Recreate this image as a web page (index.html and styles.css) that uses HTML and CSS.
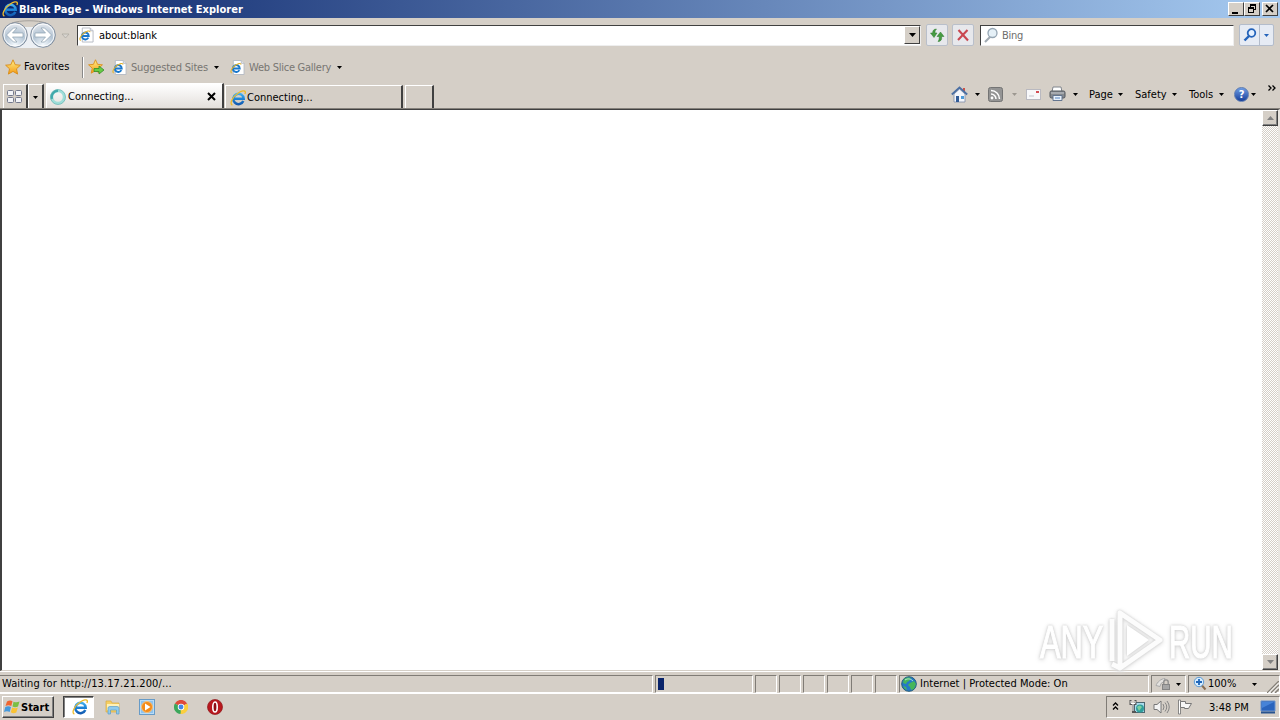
FILE: index.html
```html
<!DOCTYPE html>
<html lang="en">
<head>
    <meta charset="UTF-8">
    <title>Blank Page - Windows Internet Explorer</title>
    <link rel="stylesheet" href="styles.css">
</head>
<body>
    <!-- shared icons -->
    <svg class="defs" width="0" height="0">
        <defs>
            <linearGradient id="blue" gradientUnits="userSpaceOnUse" x1="0" y1="2" x2="0" y2="15">
                <stop offset="0" stop-color="#4fbdf5"/><stop offset="0.5" stop-color="#1f86d8"/><stop offset="1" stop-color="#1257ae"/>
            </linearGradient>
            <linearGradient id="gold" x1="0" y1="0" x2="0" y2="1">
                <stop offset="0" stop-color="#fff08a"/><stop offset="1" stop-color="#f49a13"/>
            </linearGradient>
            <radialGradient id="orb" cx="50%" cy="90%" r="85%">
                <stop offset="0" stop-color="#f4f9fd"/><stop offset="0.55" stop-color="#b3c4d4"/><stop offset="1" stop-color="#e3e7ed"/>
            </radialGradient>
            <symbol id="ie" viewBox="0 0 16 16">
                <path d="M13.300 11A5.200 5.200 0 1 1 13.700 8.700H4.500" fill="none" stroke="url(#blue)" stroke-width="2.500"/>
                <path d="M2.400 15.200C-.8 13.600 2.400 6.800 8 3.200 11.600.800 14.800.100 15.300 1.800c.2.700 0 1.400-.4 2.200" fill="none" stroke="#eebb2c" stroke-width="1.300"/>
            </symbol>
            <symbol id="iepage" viewBox="0 0 16 16">
                <path d="M3.500.5h8.500l3 3v12h-11.500z" fill="#fff" stroke="#b5bac2"/>
                <path d="M12 .5v3h3" fill="#e7eaf0" stroke="#b5bac2"/>
                <path d="M10 10.800A3.700 3.700 0 1 1 10.400 9H4" fill="none" stroke="#1b78cc" stroke-width="2"/>
                <path d="M1.700 14C-.6 12 3.500 5.500 9.500 3.800q2.300-.5 2 1.200" fill="none" stroke="#e4b32b" stroke-width="1.200"/>
            </symbol>
            <symbol id="star" viewBox="0 0 16 16">
                <path d="M8 .8l2.200 4.900 5.200.5-3.900 3.600 1.100 5.300L8 12.400l-4.600 2.700 1.100-5.300L.6 6.200l5.200-.5z" fill="url(#gold)" stroke="#d98b16" stroke-width=".9"/>
            </symbol>
            <symbol id="arrow" viewBox="0 0 5 3">
                <path d="M0 0h5L2.500 3z" fill="currentColor"/>
            </symbol>
        </defs>
    </svg>

    <div class="title-bar">
        <svg class="title-icon" width="16" height="16"><use href="#ie"/></svg>
        <span class="title-text">Blank Page - Windows Internet Explorer</span>
        <div class="window-buttons">
            <span class="win-btn"><svg width="12" height="10"><path d="M2 8h6v2H2z"/></svg></span>
            <span class="win-btn"><svg width="12" height="10"><path d="M4.500 1v2.500M4 1.500h6M9.500 1v5M8 5.500h2M2 4.500h6M2.500 4v5M7.500 4v5M2 8.500h6" stroke="#000" fill="none"/><path d="M4 0h6v2H4zM2 3h6v2H2z"/></svg></span>
            <span class="win-btn close"><svg width="12" height="10"><path d="M2 1l7 7M9 1L2 8" stroke="#000" stroke-width="1.700"/></svg></span>
        </div>
    </div>

    <div class="nav-bar">
        <svg class="nav-arrows" width="72" height="32" viewBox="0 0 72 32">
            <path d="M12 4c8-3 26-3 34 0" fill="none" stroke="#a4a09c"/>
            <path d="M15 29h28V8H15z" fill="#edf0f4"/>
            <g fill="url(#orb)" stroke="#808d9d">
                <circle cx="15" cy="16" r="12.300"/><circle cx="43" cy="16" r="12.300"/>
            </g>
            <g fill="none" stroke="#fff" stroke-opacity=".85">
                <circle cx="15" cy="16" r="11"/><circle cx="43" cy="16" r="11"/>
            </g>
            <g fill="#fff" stroke="#8ea0b0" stroke-width=".7">
                <path d="M6.500 16l7-7h3.500l-4.500 5H23v4H12.500l4.500 5H13.500z"/>
                <path d="M51.500 16l-7-7H41l4.500 5H35v4h10.500L41 23h3.500z"/>
            </g>
            <path d="M62 15h7l-3.500 4z" fill="#d8d5d0" stroke="#aaa69f" stroke-width=".7"/>
        </svg>
        <div class="address-box">
            <svg width="15" height="16"><use href="#iepage"/></svg>
            <span class="address-text">about:blank</span>
            <span class="address-drop"><svg width="7" height="4" viewBox="0 0 7 4"><path d="M0 0h7L3.500 4z"/></svg></span>
        </div>
        <span class="nav-btn refresh"><svg width="16" height="16"><path d="M7.500 2C4.500 2 3.500 4 3.700 6H1.500L5 10.500 8 6H6C5.900 4.500 6 3.500 7.500 2z" fill="#469b42" stroke="#2c7b2e" stroke-width=".5"/><path d="M9 14.500c3 0 4-2 3.600-5H15L11.500 5 8 9.500h2.200c.1 2 0 3.500-1.200 5z" fill="#469b42" stroke="#2c7b2e" stroke-width=".5"/></svg></span>
        <span class="nav-btn stop"><svg width="16" height="16"><path d="M3.500 3l9.500 10.500M12.500 3L3 13" stroke="#c94750" stroke-width="2.100"/></svg></span>
        <div class="search-box">
            <svg width="17" height="17"><path d="M7 10l-5 5" stroke="#a1aab2" stroke-width="2.200"/><circle cx="9.500" cy="6" r="4.500" fill="#e5f0f7" stroke="#95a5b3" stroke-width="1.300"/></svg>
            <span class="search-text">Bing</span>
        </div>
        <div class="search-go">
            <span><svg width="16" height="16"><path d="M7 9l-4.500 4.500" stroke="#2463ba" stroke-width="2.400"/><circle cx="9.500" cy="6" r="3.800" fill="#e4f0ff" stroke="#2463ba" stroke-width="1.800"/></svg></span>
            <span class="go-drop"><svg width="5" height="3"><use href="#arrow"/></svg></span>
        </div>
    </div>

    <div class="favorites-bar">
        <svg class="fav-star" width="16" height="16"><use href="#star"/></svg>
        <span class="fav-title">Favorites</span>
        <span class="separator"></span>
        <svg class="add-star" width="17" height="16"><use href="#star" width="15" height="15"/><path d="M6 9.500h5V7l5 4-5 4v-2.500H6z" fill="#67cc45" stroke="#338b2a" stroke-width=".8"/></svg>
        <svg class="page-icon" width="15" height="15"><use href="#iepage"/></svg>
        <span class="fav-link suggested">Suggested Sites</span>
        <svg width="5" height="3"><use href="#arrow"/></svg>
        <svg class="page-icon second" width="15" height="15"><use href="#iepage"/></svg>
        <span class="fav-link gallery">Web Slice Gallery</span>
        <svg width="5" height="3"><use href="#arrow"/></svg>
    </div>

    <div class="tab-row">
        <div class="quick-tabs">
            <svg width="16" height="14"><g fill="#f3f4f8" stroke="#74798d"><rect x=".5" y=".5" width="6" height="5" rx="1"/><rect x="8.500" y=".5" width="6" height="5" rx="1"/><rect x=".5" y="7.500" width="6" height="5" rx="1"/><rect x="8.500" y="7.500" width="6" height="5" rx="1"/></g></svg>
        </div>
        <div class="quick-drop"><svg width="5" height="3"><use href="#arrow"/></svg></div>
        <div class="tab active">
            <svg width="16" height="16"><circle cx="8" cy="8" r="6.200" fill="none" stroke="#9fded9" stroke-width="2.800"/><path d="M2 10A6.200 6.200 0 0 1 8 1.800" fill="none" stroke="#3fa9ab" stroke-width="2.500"/><circle cx="8" cy="8" r="7.500" fill="none" stroke="#65b5b3" stroke-width=".7"/></svg>
            <span>Connecting...</span>
            <svg class="tab-close" width="9" height="9"><path d="M1 1l7 7M8 1L1 8" stroke="#000" stroke-width="2"/></svg>
        </div>
        <div class="tab second">
            <svg width="16" height="16"><use href="#ie"/></svg>
            <span>Connecting...</span>
        </div>
        <div class="new-tab"></div>
        <div class="command-bar">
            <svg width="17" height="17"><path d="M12 2h2v4h-2z" fill="#cd5148"/><path d="M3 8v8h11V8L8.500 3z" fill="#f4f6fb" stroke="#7d8da9" stroke-width=".8"/><path d="M.8 8.500l7.700-7 7.700 7" fill="none" stroke="#4b6fa3" stroke-width="1.800"/><path d="M5 10h3v6H5z" fill="#315b96"/><path d="M10 10h3v3h-3z" fill="#4e9bd9"/></svg>
            <svg class="home-drop" width="5" height="3"><use href="#arrow"/></svg>
            <svg class="rss" width="15" height="15"><rect x=".5" y=".5" width="14" height="14" rx="2" fill="#949494" stroke="#747474"/><circle cx="4" cy="11" r="1.400" fill="#fff"/><path d="M3 7a5 5 0 0 1 5 5M3 3.500a8.500 8.500 0 0 1 8.500 8.500" fill="none" stroke="#fff" stroke-width="1.500"/></svg>
            <svg class="rss-drop" width="5" height="3"><use href="#arrow"/></svg>
            <svg class="mail" width="15" height="11"><rect x=".5" y=".5" width="14" height="10" fill="#f8f8fa" stroke="#b9b9c0"/><path d="M10 2h3v2h-3z" fill="#d44e55"/><path d="M3 7h5" stroke="#c2c4cc"/></svg>
            <svg class="printer" width="17" height="16"><path d="M4 1h8l1 5H3z" fill="#fff" stroke="#80858c"/><rect x="1" y="5" width="15" height="7" rx="1.500" fill="#85898f" stroke="#51565d"/><path d="M2 7h13" stroke="#c7cbd0"/><path d="M4 9.500h9v5H4z" fill="#e8f1fb" stroke="#63758f"/><path d="M6 12h5" stroke="#5481bd"/></svg>
            <svg class="print-drop" width="5" height="3"><use href="#arrow"/></svg>
            <span class="menu page-menu">Page</span><svg width="5" height="3"><use href="#arrow"/></svg>
            <span class="menu safety">Safety</span><svg width="5" height="3"><use href="#arrow"/></svg>
            <span class="menu tools">Tools</span><svg width="5" height="3"><use href="#arrow"/></svg>
            <span class="help">?</span><svg width="5" height="3"><use href="#arrow"/></svg>
            <svg class="more" width="8" height="6"><path d="M.5.500L3 3 .5 5.500M4.500.500L7 3 4.500 5.500" fill="none" stroke="#000" stroke-width="1.300"/></svg>
        </div>
    </div>

    <div class="viewport">
        <div class="page"></div>
        <div class="scrollbar">
            <span class="scroll-btn"><svg width="7" height="4"><path d="M0 4h7L3.500 0z" fill="#808080"/></svg></span>
            <span class="scroll-btn"><svg width="7" height="4"><path d="M0 0h7L3.500 4z" fill="#808080"/></svg></span>
        </div>
        <svg class="watermark" width="216" height="70" viewBox="0 0 216 70">
            <g fill="#fff" stroke="#fff" stroke-width="1.200">
                <text transform="translate(8 53) scale(.67 1)">ANY</text>
                <text transform="translate(137 53) scale(.64 1)">RUN</text>
            </g>
            <path d="M88 8v55l40-28zM88 8l40 27M80 56V14M88 63l-8-4" fill="none" stroke="#fcfcfc" stroke-width="5" stroke-linejoin="round"/>
            <path d="M95 20v31l22-16z" fill="#fff"/>
        </svg>
    </div>

    <div class="status-bar">
        <div class="pane message">Waiting for http://13.17.21.200/...</div>
        <div class="pane progress"><span class="chunk"></span></div>
        <div class="pane small"></div>
        <div class="pane small"></div>
        <div class="pane small"></div>
        <div class="pane small"></div>
        <div class="pane small"></div>
        <div class="pane small"></div>
        <div class="pane zone">
            <svg width="16" height="16"><circle cx="8" cy="8" r="7.300" fill="#2479c7" stroke="#235c79"/><path d="M3 3c3-2 6-2 7-.5L8 5 6 6 5 8 2 7zM9 7l4-2 2 3-2 5-3 1-1-3-2-2zM2 10l3 1 1 3-2-1z" fill="#46b65a"/><path d="M4 4c3-2 6-1 8 1" fill="none" stroke="#b3e9de"/></svg>
            <span>Internet | Protected Mode: On</span>
        </div>
        <div class="pane privacy">
            <svg width="18" height="16"><path d="M1 9.500c1-3 5-7 9-7l-1 3-3 2-1 3z" fill="#e4e2df" stroke="#aaa"/><rect x="7.500" y="8.500" width="7" height="5" fill="#a6a6a6" stroke="#858585"/><path d="M8.800 8V6a2.200 2.200 0 0 1 4.400 0V8" fill="none" stroke="#8c8c8c" stroke-width="1.300"/></svg>
            <svg class="pane-drop" width="5" height="3"><use href="#arrow"/></svg>
        </div>
        <div class="pane zoom">
            <svg width="14" height="16"><path d="M8.500 9l4 4.500" stroke="#896e54" stroke-width="2"/><circle cx="6" cy="6" r="4.700" fill="#d7edff" stroke="#5f9bd3"/><path d="M6 3v6M3 6h6" stroke="#2167ba" stroke-width="1.800"/></svg>
            <span>100%</span>
            <svg class="pane-drop" width="5" height="3"><use href="#arrow"/></svg>
            <svg class="grip" width="12" height="12"><path d="M0 12L12 0M4 12l8-8M8 12l4-4" stroke="#858078" stroke-width="1.500"/><path d="M1.500 12L12 1.500M5.500 12L12 5.500" stroke="#fff"/></svg>
        </div>
    </div>

    <div class="taskbar">
        <div class="start">
            <svg width="17" height="16"><path d="M3 2.500q3-2 5.500-.3L7.300 7Q4.500 5.500 1.500 7z" fill="#ef6530"/><path d="M9.500 2.700q3 1.200 6-.2L14 7.500q-3 1.500-5.500 0z" fill="#7abf43"/><path d="M1.300 8q3-1.500 5.700 0l-1.300 5Q3 11.500 0 13z" fill="#4599dc"/><path d="M8.200 8.500q3 1.300 5.600 0l-1.500 5q-3 1.400-5.500-.2z" fill="#fac334"/></svg>
            <span>Start</span>
        </div>
        <div class="task-ie"><svg width="16" height="16"><use href="#ie"/></svg></div>
        <svg class="folder" width="16" height="16"><path d="M1 2h5l1 2h7v9H1z" fill="#f5cf63" stroke="#d8aa42" stroke-width=".7"/><path d="M2 5h12v6H2z" fill="#fff1b6"/><path d="M3 15V9q0-1.500 2-1.500h7q2 0 2 1.500v6h-2.500v-4h-6v4z" fill="#8fcbed" stroke="#5b9ec8" stroke-width=".7"/></svg>
        <svg class="media" width="16" height="16"><rect x=".5" y=".5" width="15" height="15" fill="#b8dcf7" stroke="#679bc7"/><path d="M2 2h12v12H2z" fill="#8fc3ee"/><circle cx="8" cy="8" r="5.500" fill="#f48b18" stroke="#fac075"/><path d="M6 4.500L11.500 8 6 11.500z" fill="#fff"/></svg>
        <svg class="chrome" width="14" height="14" viewBox="0 0 16 16"><path d="M8 8L1 4a8 8 0 0 1 14 0z" fill="#df4a3b"/><path d="M8 8L1 4a8 8 0 0 0 6.500 12L11 10z" fill="#3ca75b"/><path d="M8 8l7.200-4A8 8 0 0 1 7.500 16z" fill="#fbcf3e"/><circle cx="8" cy="8" r="3.700" fill="#fff"/><circle cx="8" cy="8" r="2.800" fill="#4587e8"/></svg>
        <svg class="opera" width="16" height="16"><circle cx="8" cy="8" r="7.500" fill="#b9181e" stroke="#8e1519" stroke-width=".7"/><ellipse cx="8" cy="8" rx="2.200" ry="5" fill="#8f0c12" stroke="#fff" stroke-width="1.600"/></svg>
        <div class="tray">
            <svg class="tray-more" width="7" height="8"><path d="M1 3.500L3.500 1 6 3.500M1 7.500L3.500 5 6 7.500" fill="none" stroke="#000" stroke-width="1.300"/></svg>
            <svg class="tray-net" width="17" height="16"><rect x="5.500" y="3.500" width="10" height="10" fill="#a9dcec" stroke="#4b6670"/><circle cx="11" cy="9.500" r="4" fill="#2f9e9b"/><path d="M8 8q3-3 5 0l-3 4z" fill="#7fd0a0"/><path d="M1.500 1v4h5V1M4 5v8h3" fill="none" stroke="#565656" stroke-width="2"/><path d="M2 2v2.500h4V2M4 5v7" fill="none" stroke="#fff"/></svg>
            <svg class="tray-sound" width="17" height="16"><path d="M1 5.500h3L8 2v12l-4-3.500H1z" fill="#f3f3f3" stroke="#777"/><path d="M10 5q2 3 0 6M12 3.500q3.500 4.500 0 9M14 2q4.500 6 0 12" fill="none" stroke="#858585"/></svg>
            <svg class="tray-flag" width="17" height="16"><path d="M1.500 1h2v14h-2z" fill="#fff" stroke="#6f6f6f" stroke-width=".8"/><path d="M3.500 2.500h5v2h6l-3 5h-4v-1h-4z" fill="#f6f6f6" stroke="#777"/></svg>
            <span class="clock">3:48 PM</span>
            <svg class="desktop" width="16" height="15"><path d="M1 1h14v10H1z" fill="#2a64bd" stroke="#6b93cc"/><path d="M2 2h12L2 8z" fill="#4683d8"/><path d="M1 12.500h14" stroke="#28538e" stroke-width="2"/></svg>
        </div>
    </div>
</body>
</html>
```
FILE: styles.css
```css
* {
    box-sizing: border-box;
}
body {
    margin: 0;
    width: 1280px;
    height: 720px;
    overflow: hidden;
    display: flex;
    flex-direction: column;
    background-color: #d5cfc7;
    color: #000;
    font-family: "DejaVu Sans Condensed", "DejaVu Sans", sans-serif;
    font-stretch: condensed;
    font-size: 11px;
    line-height: 14px;
    white-space: nowrap;
}
svg {
    display: block;
    flex: none;
}
.defs {
    position: absolute;
}

/* title bar */
.title-bar {
    height: 18px;
    display: flex;
    align-items: center;
    padding: 0 2px;
    background: linear-gradient(to right, #0a246a, #a6caf0);
}
.title-text {
    color: #fff;
    font-weight: bold;
    margin-left: 1px;
    padding-top: 1px;
    letter-spacing: 0.03px;
}
.window-buttons {
    display: flex;
    margin-left: auto;
}
.win-btn {
    width: 16px;
    height: 14px;
    padding: 1px;
    background-color: #d5cfc7;
    border: 1px solid;
    border-color: #fff #404040 #404040 #fff;
}
.win-btn.close {
    margin-left: 2px;
}

/* address row */
.nav-bar {
    height: 34px;
    display: flex;
    align-items: center;
}
.nav-arrows {
    margin-bottom: 1px;
}
.address-box, .search-box {
    height: 21px;
    display: flex;
    align-items: center;
    background-color: #fff;
    border: 1px solid;
    border-color: #404040 #eee #eee #404040;
}
.address-box {
    width: 844px;
    margin-left: 5px;
    padding-left: 1px;
}
.address-text {
    margin-left: 5px;
    padding-top: 2px;
    letter-spacing: -0.1px;
}
.address-drop {
    width: 16px;
    height: 18px;
    margin-left: auto;
    display: flex;
    align-items: center;
    justify-content: center;
    background-color: #d5cfc7;
    border: 1px solid;
    border-color: #fff #404040 #404040 #fff;
}
.nav-btn {
    width: 22px;
    height: 22px;
    display: flex;
    align-items: center;
    justify-content: center;
    margin-left: 5px;
    background-color: #e7e8ec;
    border: 1px solid #b9bfca;
    border-radius: 2px;
}
.nav-btn.stop {
    margin-left: 4px;
}
.search-box {
    width: 254px;
    margin-left: 6px;
    padding-left: 2px;
}
.search-text {
    margin-left: 2px;
    padding-top: 2px;
    letter-spacing: -0.3px;
    color: #6d6d6d;
}
.search-go {
    display: flex;
    width: 35px;
    height: 22px;
    margin-left: 5px;
    background-color: #e6ebf4;
    border: 1px solid #b3bccb;
    border-radius: 2px;
}
.search-go span {
    width: 20px;
    display: flex;
    align-items: center;
    justify-content: center;
}
.search-go .go-drop {
    width: 14px;
    color: #2463ba;
    border-left: 1px solid #b3bccb;
}

/* favorites row */
.favorites-bar {
    height: 30px;
    display: flex;
    align-items: center;
    padding-left: 5px;
}
.fav-title {
    width: 46px;
    margin-left: 3px;
    letter-spacing: 0.1px;
}
.separator {
    width: 2px;
    height: 21px;
    margin-left: 12px;
    border-left: 1px solid #888;
    border-right: 1px solid #fff;
}
.add-star {
    margin-left: 4px;
}
.page-icon {
    margin-left: 7px;
}
.page-icon.second {
    margin-left: 11px;
}
.fav-link {
    margin: 0 6px 0 4px;
    padding-top: 1px;
    color: #787672;
    letter-spacing: -0.2px;
}
.suggested {
    width: 77px;
}
.gallery {
    width: 82px;
    letter-spacing: -0.25px;
}

/* tabs and command bar */
.tab-row {
    height: 27px;
    display: flex;
    align-items: flex-end;
    padding-left: 3px;
}
.quick-tabs, .quick-drop {
    height: 25px;
    display: flex;
    align-items: center;
    justify-content: center;
    border-top: 1px solid #fff;
    border-right: 2px solid #404040;
}
.quick-tabs {
    width: 25px;
    border-left: 1px solid #fff;
}
.quick-drop {
    width: 16px;
    border-left: 1px solid #fff;
}
.tab {
    height: 24px;
    display: flex;
    align-items: center;
    border-top: 1px solid #fff;
    border-left: 1px solid #fff;
    border-right: 2px solid #404040;
}
.tab.active {
    width: 178px;
    height: 26px;
    margin-left: 2px;
    padding-left: 3px;
    background: linear-gradient(#fff, #e2deda);
}
.tab.second {
    width: 178px;
    margin-left: 1px;
    padding-left: 4px;
}
.tab span {
    margin-left: 2px;
}
.tab.second span {
    margin-left: 1px;
}
.tab-close {
    margin-left: auto;
    margin-right: 6px;
}
.new-tab {
    width: 29px;
    height: 24px;
    margin-left: 2px;
    border-top: 1px solid #fff;
    border-left: 1px solid #fff;
    border-right: 2px solid #404040;
}
.command-bar {
    height: 27px;
    margin-left: auto;
    padding: 0 4px 3px 0;
    display: flex;
    align-items: center;
}
.home-drop, .print-drop {
    margin-left: 7px;
}
.rss {
    margin-left: 8px;
}
.rss-drop {
    margin-left: 9px;
    color: #9c9790;
}
.mail {
    margin-left: 9px;
}
.printer {
    margin-left: 8px;
}
.menu {
    margin-right: 4px;
    margin-left: 12px;
    padding-top: 1px;
}
.page-menu {
    width: 25px;
    margin-left: 11px;
}
.safety {
    width: 33px;
}
.tools {
    width: 26px;
}
.help {
    width: 15px;
    height: 15px;
    margin: 0 2px 0 10px;
    border-radius: 50%;
    border: 1px solid #5c7bb1;
    background: linear-gradient(#6f9de4, #163f9b);
    color: #fff;
    font-weight: bold;
    line-height: 13px;
    text-align: center;
}
.more {
    margin: -12px 0 0 12px;
}

/* page area */
.viewport {
    position: relative;
    height: 562px;
    display: flex;
    border: 1px solid #404040;
    border-left-width: 2px;
    border-right: 2px solid #e9e6e1;
    border-bottom-color: #d5cfc7;
    background-color: #fff;
    box-shadow: 0 -1px #85817b;
}
.page {
    flex: 1;
}
.scrollbar {
    width: 16px;
    display: flex;
    flex-direction: column;
    justify-content: space-between;
    background: repeating-conic-gradient(#d5cfc7 0 25%, #fff 0 50%) 0 0 / 2px 2px;
}
.scroll-btn {
    height: 16px;
    display: flex;
    align-items: center;
    justify-content: center;
    background-color: #d5cfc7;
    border: 1px solid;
    border-color: #fff #404040 #404040 #fff;
    box-shadow: inset -1px -1px #808080;
}
.watermark {
    position: absolute;
    right: 30px;
    bottom: -5px;
    overflow: visible;
    filter: drop-shadow(0 0 1px #ccc) drop-shadow(0 1px 2px #ddd);
}
.watermark text {
    font-family: "Liberation Sans", Arial, sans-serif;
    font-size: 46px;
}

/* status bar */
.status-bar {
    height: 23px;
    display: flex;
    gap: 2px;
    padding: 3px 0 1px;
    border-top: 1px solid #fff;
    border-bottom: 1px solid #fff;
}
.pane {
    height: 18px;
    display: flex;
    align-items: center;
    border: 1px solid;
    border-color: #807c76 #fff #fff #807c76;
}
.message {
    width: 653px;
    border-left: none;
    padding-left: 2px;
    letter-spacing: 0.1px;
}
.progress {
    width: 98px;
    padding-left: 2px;
}
.chunk {
    width: 6px;
    height: 12px;
    background-color: #0a246a;
}
.small {
    width: 22px;
}
.zone {
    width: 250px;
    padding-left: 1px;
}
.zone span {
    margin-left: 3px;
    letter-spacing: 0.03px;
}
.privacy {
    width: 35px;
    padding-left: 3px;
}
.privacy .pane-drop {
    margin-left: 3px;
}
.zoom {
    flex: 1;
    padding-left: 4px;
}
.zoom span {
    width: 30px;
    margin-left: 1px;
}
.zoom .pane-drop {
    margin-left: 14px;
}
.grip {
    margin: 5px 0 0 auto;
}

/* taskbar */
.taskbar {
    height: 26px;
    display: flex;
    align-items: center;
    padding-left: 2px;
}
.start {
    width: 52px;
    height: 22px;
    display: flex;
    align-items: center;
    padding-left: 1px;
    border: 1px solid;
    border-color: #fff #404040 #404040 #fff;
    box-shadow: inset -1px -1px #808080;
    font-weight: bold;
}
.start span {
    padding-top: 1px;
}
.task-ie {
    width: 31px;
    height: 22px;
    margin-left: 9px;
    padding-left: 2px;
    display: flex;
    align-items: center;
    justify-content: center;
    background-color: #fff;
    border: 1px solid;
    border-color: #404040 #fff #fff #404040;
    box-shadow: inset 1px 1px #808080;
}
.folder {
    margin-left: 11px;
}
.media {
    margin-left: 18px;
}
.chrome {
    margin-left: 19px;
}
.opera {
    margin-left: 19px;
}
.tray {
    width: 174px;
    height: 22px;
    margin-left: auto;
    display: flex;
    align-items: center;
    padding-left: 5px;
    border: 1px solid;
    border-color: #807c76 #fff #fff #807c76;
}
.tray-more {
    margin-bottom: 2px;
}
.tray-net {
    margin-left: 10px;
}
.tray-sound, .tray-flag {
    margin-left: 7px;
}
.clock {
    width: 40px;
    margin-left: 15px;
    padding-top: 1px;
}
.desktop {
    margin-left: 11px;
}
```
